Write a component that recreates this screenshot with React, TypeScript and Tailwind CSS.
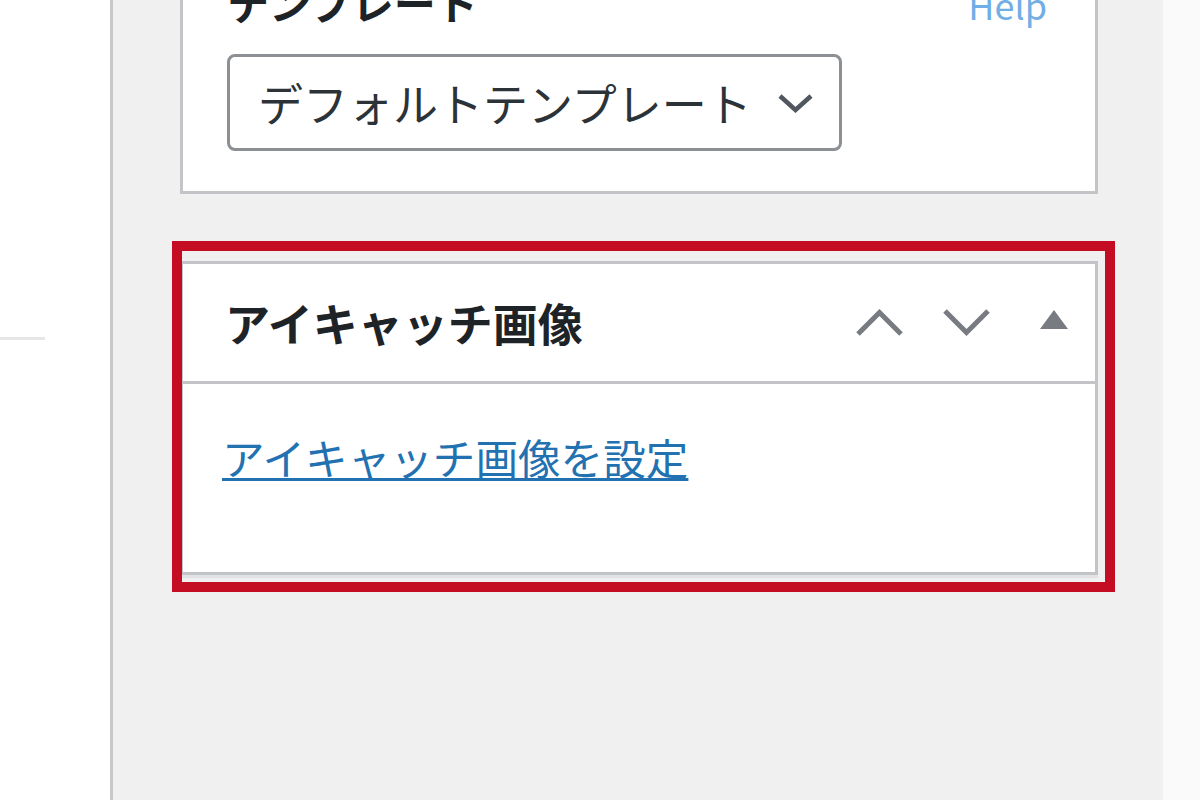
const jp = "font-['Noto_Sans_CJK_JP',sans-serif]";

const ChevronUp = () => (
  <svg width="47" height="27" viewBox="0 0 47 27" fill="none">
    <polyline points="2,25 23.5,3.5 45,25" stroke="#787c82" strokeWidth="5" />
  </svg>
);

const ChevronDown = () => (
  <svg width="47" height="27" viewBox="0 0 47 27" fill="none">
    <polyline points="2,2 23.5,23.5 45,2" stroke="#787c82" strokeWidth="5" />
  </svg>
);

const Triangle = () => (
  <svg width="28" height="19" viewBox="0 0 28 19">
    <polygon points="14,0 28,19 0,19" fill="#787c82" />
  </svg>
);

export default function App() {
  return (
    <div className={`flex w-[1200px] h-[800px] overflow-hidden ${jp}`}>
      {/* editor area (left) */}
      <div className="w-[110px] shrink-0 bg-white">
        <div className="mt-[337px] h-[3px] w-[45px] bg-[#e6e6e6]"></div>
      </div>

      {/* sidebar */}
      <div className="w-[1053px] shrink-0 border-l-[3px] border-[#c9c9cc] bg-[#f0f0f1] pl-[67px]">
        {/* Template card */}
        <div className="-mt-[51px] w-[918px] border-[3px] border-[#c3c4c7] bg-white px-[44px] pt-[20px] pb-[40px]">
          <div className="flex items-baseline justify-between leading-[59px]">
            <span className="text-[42px] font-semibold text-[#1d2327]">テンプレート</span>
            <span className="text-[36px] text-[#72aee6] mr-[4px]">Help</span>
          </div>
          <div className="mt-[20px] flex h-[97px] w-[615px] items-center justify-between rounded-[8px] border-[3px] border-[#8c8f94] pl-[28px] pr-[26px]">
            <span className="text-[45px] leading-none text-[#2c3338]">デフォルトテンプレート</span>
            <svg width="35" height="20" viewBox="0 0 35 20" fill="none">
              <polyline points="2,3 17.5,17 33,3" stroke="#50575e" strokeWidth="4.5" />
            </svg>
          </div>
        </div>

        {/* Featured image card */}
        <div className="relative mt-[67px] w-[918px] border-[3px] border-[#c3c4c7] bg-white shadow-[0_3px_0_#e2e3e5]">
          <div className="flex h-[117px] items-center justify-between pl-[42px] pr-[27px]">
            <span className="text-[45px] font-semibold text-[#1d2327]">アイキャッチ画像</span>
            <div className="flex items-center">
              <ChevronUp />
              <div className="ml-[40px]">
                <ChevronDown />
              </div>
              <div className="ml-[50px] mb-[6px]">
                <Triangle />
              </div>
            </div>
          </div>
          <div className="h-[191px] border-t-[3px] border-[#c3c4c7] pl-[39px] pt-[41px]">
            <a className="text-[42.6px] leading-[1.5] text-[#2271b1] underline decoration-[3px] underline-offset-[3px]">
              アイキャッチ画像を設定
            </a>
          </div>

          {/* highlight box */}
          <div className="pointer-events-none absolute -left-[11px] -top-[23px] -right-[20px] -bottom-[20px] border-[10px] border-[#c40d23]"></div>
        </div>
      </div>

      {/* right edge */}
      <div className="flex-1 bg-[#fafafa]"></div>
    </div>
  );
}
